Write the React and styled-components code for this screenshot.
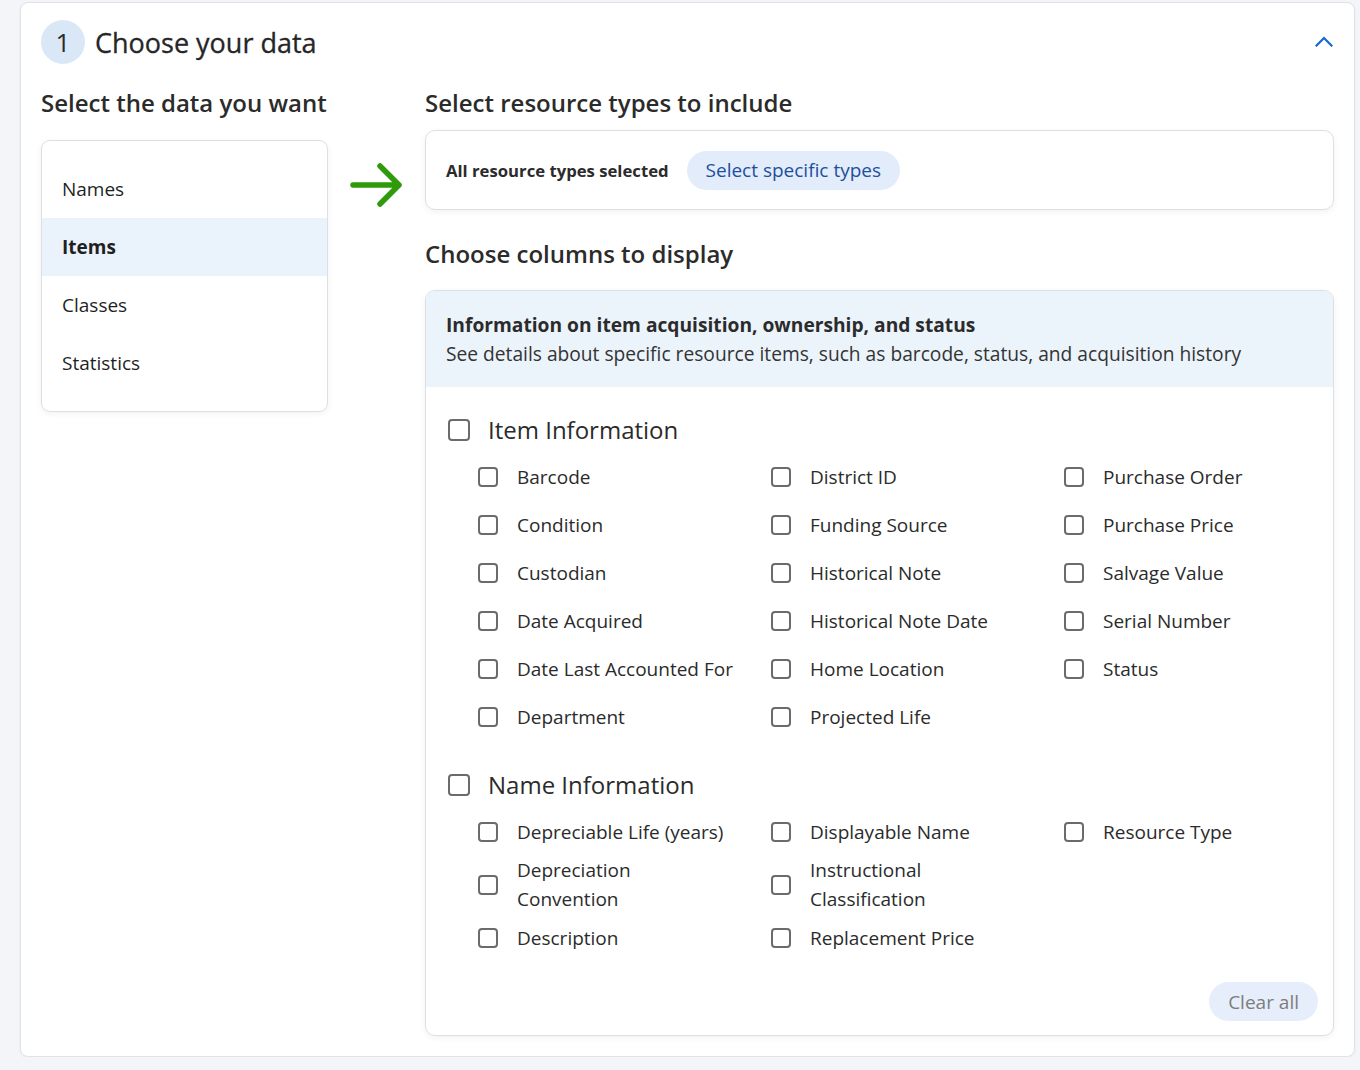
import React from "react";
import styled, { createGlobalStyle } from "styled-components";

const itemColumns = [
  ["Barcode", "Condition", "Custodian", "Date Acquired", "Date Last Accounted For", "Department"],
  ["District ID", "Funding Source", "Historical Note", "Historical Note Date", "Home Location", "Projected Life"],
  ["Purchase Order", "Purchase Price", "Salvage Value", "Serial Number", "Status"],
];

const nameColumns = [
  ["Depreciable Life (years)", "Depreciation Convention", "Description"],
  ["Displayable Name", "Instructional Classification", "Replacement Price"],
  ["Resource Type"],
];

const dataSources = ["Names", "Items", "Classes", "Statistics"];

// lay columns out row by row so the grid fills left to right
function toRows(columns) {
  const depth = Math.max(...columns.map((c) => c.length));
  const cells = [];
  for (let r = 0; r < depth; r++) {
    for (let c = 0; c < columns.length; c++) {
      cells.push(columns[c][r] || null);
    }
  }
  return cells;
}

function ColumnGroup({ title, columns }) {
  return (
    <Group>
      <GroupHeading>
        <Box $size={22} />
        {title}
      </GroupHeading>
      <OptionGrid>
        {toRows(columns).map((label, i) =>
          label ? (
            <Option key={label}>
              <Box $size={20} />
              <OptionText>{label}</OptionText>
            </Option>
          ) : (
            <span key={"blank" + i} />
          )
        )}
      </OptionGrid>
    </Group>
  );
}

export default function App() {
  return (
    <>
      <GlobalStyle />
      <Card>
        <Header>
          <StepBadge>1</StepBadge>
          <Title>Choose your data</Title>
          <Collapse aria-label="Collapse">
            <svg width="18" height="11" viewBox="0 0 18 11" fill="none">
              <path d="M1.5 9.5L9 2l7.5 7.5" stroke="#1766d6" strokeWidth="2.2" strokeLinecap="square" />
            </svg>
          </Collapse>
        </Header>

        <Body>
          <LeftColumn>
            <SectionTitle>Select the data you want</SectionTitle>
            <SourceList>
              {dataSources.map((name) => (
                <SourceItem key={name} $active={name === "Items"}>
                  {name}
                </SourceItem>
              ))}
            </SourceList>
          </LeftColumn>

          <ArrowColumn>
            <svg width="54" height="46" viewBox="0 0 54 46" fill="none">
              <path
                d="M3 23h46M30 4l19 19-19 19"
                stroke="#2f9a0a"
                strokeWidth="5.5"
                strokeLinecap="round"
                strokeLinejoin="round"
              />
            </svg>
          </ArrowColumn>

          <RightColumn>
            <SectionTitle>Select resource types to include</SectionTitle>
            <TypeBox>
              <TypeLabel>All resource types selected</TypeLabel>
              <PillButton>Select specific types</PillButton>
            </TypeBox>

            <SectionTitle $top={28}>Choose columns to display</SectionTitle>
            <ColumnsCard>
              <InfoBanner>
                <InfoTitle>Information on item acquisition, ownership, and status</InfoTitle>
                <InfoText>
                  See details about specific resource items, such as barcode, status, and acquisition history
                </InfoText>
              </InfoBanner>

              <ColumnsBody>
                <ColumnGroup title="Item Information" columns={itemColumns} />
                <ColumnGroup title="Name Information" columns={nameColumns} />
                <Footer>
                  <ClearButton>Clear all</ClearButton>
                </Footer>
              </ColumnsBody>
            </ColumnsCard>
          </RightColumn>
        </Body>
      </Card>
    </>
  );
}

const GlobalStyle = createGlobalStyle`
  body {
    margin: 0;
    background: #f4f5f8;
    font-family: "Open Sans", "Noto Sans", sans-serif;
    color: #2b2b2b;
  }
  * { box-sizing: border-box; }
`;

const Card = styled.section`
  margin: 2px 0 0 20px;
  width: 1335px;
  height: 1055px;
  background: #fff;
  border: 1px solid #dfe3e8;
  border-radius: 8px;
  padding: 17px 20px 20px 20px;
  box-shadow: 0 1px 3px rgba(30, 40, 60, 0.05);
`;

const Header = styled.header`
  display: flex;
  align-items: center;
  gap: 10px;
  height: 44px;
`;

const StepBadge = styled.div`
  width: 44px;
  height: 44px;
  border-radius: 50%;
  background: #d9e7f7;
  display: flex;
  align-items: center;
  justify-content: center;
  font-size: 26px;
  color: #2b2b2b;
`;

const Title = styled.h1`
  margin: 0;
  font-size: 27px;
  font-weight: 500;
  color: #262626;
  flex: 1;
  -webkit-text-stroke: 0.3px #262626;
`;

const Collapse = styled.button`
  border: 0;
  background: none;
  padding: 0;
  margin: -2px 1px 0 0;
  display: flex;
  cursor: pointer;
`;

const Body = styled.div`
  display: flex;
  margin-top: 23px;
`;

const LeftColumn = styled.div`
  width: 287px;
  flex-shrink: 0;
`;

const ArrowColumn = styled.div`
  width: 97px;
  flex-shrink: 0;
  padding: 75px 0 0 22px;
`;

const RightColumn = styled.div`
  flex: 1;
  min-width: 0;
`;

const SectionTitle = styled.h2`
  margin: ${(p) => p.$top || 0}px 0 0;
  font-size: 24px;
  line-height: 31px;
  font-weight: 600;
  color: #2b2b2b;
`;

const SourceList = styled.ul`
  list-style: none;
  margin: 22px 0 0;
  padding: 19px 0;
  border: 1px solid #dcdfe3;
  border-radius: 9px;
  box-shadow: 0 2px 6px rgba(30, 40, 60, 0.06);
`;

const SourceItem = styled.li`
  height: 58px;
  display: flex;
  align-items: center;
  padding-left: 20px;
  font-size: 19px;
  font-weight: ${(p) => (p.$active ? 700 : 400)};
  background: ${(p) => (p.$active ? "#eaf2fb" : "transparent")};
  color: #1f1f1f;
`;

const TypeBox = styled.div`
  margin-top: 12px;
  height: 80px;
  display: flex;
  align-items: center;
  gap: 18px;
  padding: 0 20px;
  border: 1px solid #dcdfe3;
  border-radius: 10px;
  box-shadow: 0 2px 6px rgba(30, 40, 60, 0.06);
`;

const TypeLabel = styled.span`
  font-size: 16.7px;
  font-weight: 700;
  color: #2b2b2b;
`;

const PillButton = styled.button`
  height: 39px;
  padding: 0 19px;
  border: 0;
  border-radius: 20px;
  background: #e3ecfa;
  color: #1d4f9e;
  font-family: inherit;
  font-size: 19px;
`;

const ColumnsCard = styled.div`
  margin-top: 21px;
  border: 1px solid #dcdfe3;
  border-radius: 10px;
  overflow: hidden;
  box-shadow: 0 2px 6px rgba(30, 40, 60, 0.06);
`;

const InfoBanner = styled.div`
  background: #ebf3fb;
  padding: 19px 20px;
  font-size: 19.2px;
  line-height: 29px;
`;

const InfoTitle = styled.div`
  font-weight: 700;
  color: #2b2b2b;
`;

const InfoText = styled.div`
  color: #333;
`;

const ColumnsBody = styled.div`
  padding: 19px 15px 14px 22px;
`;

const Group = styled.div`
  & + & {
    margin-top: 20px;
  }
`;

const GroupHeading = styled.div`
  display: flex;
  align-items: center;
  gap: 18px;
  height: 47px;
  font-size: 24px;
  color: #2b2b2b;
`;

const Box = styled.span`
  width: ${(p) => p.$size}px;
  height: ${(p) => p.$size}px;
  flex-shrink: 0;
  border: 2px solid #6b6b6b;
  border-radius: 4px;
  background: #fff;
`;

const OptionGrid = styled.div`
  display: grid;
  grid-template-columns: 293px 293px 1fr;
  padding-left: 30px;
`;

const Option = styled.label`
  display: flex;
  align-items: center;
  gap: 19px;
  min-height: 48px;
  font-size: 19px;
  line-height: 29px;
  color: #2b2b2b;
`;

const OptionText = styled.span`
  max-width: 217px;
`;

const Footer = styled.div`
  display: flex;
  justify-content: flex-end;
  margin-top: 20px;
`;

const ClearButton = styled.button`
  height: 39px;
  padding: 0 19px;
  border: 0;
  border-radius: 20px;
  background: #e6eefb;
  color: #7d7d7d;
  font-family: inherit;
  font-size: 19px;
`;
